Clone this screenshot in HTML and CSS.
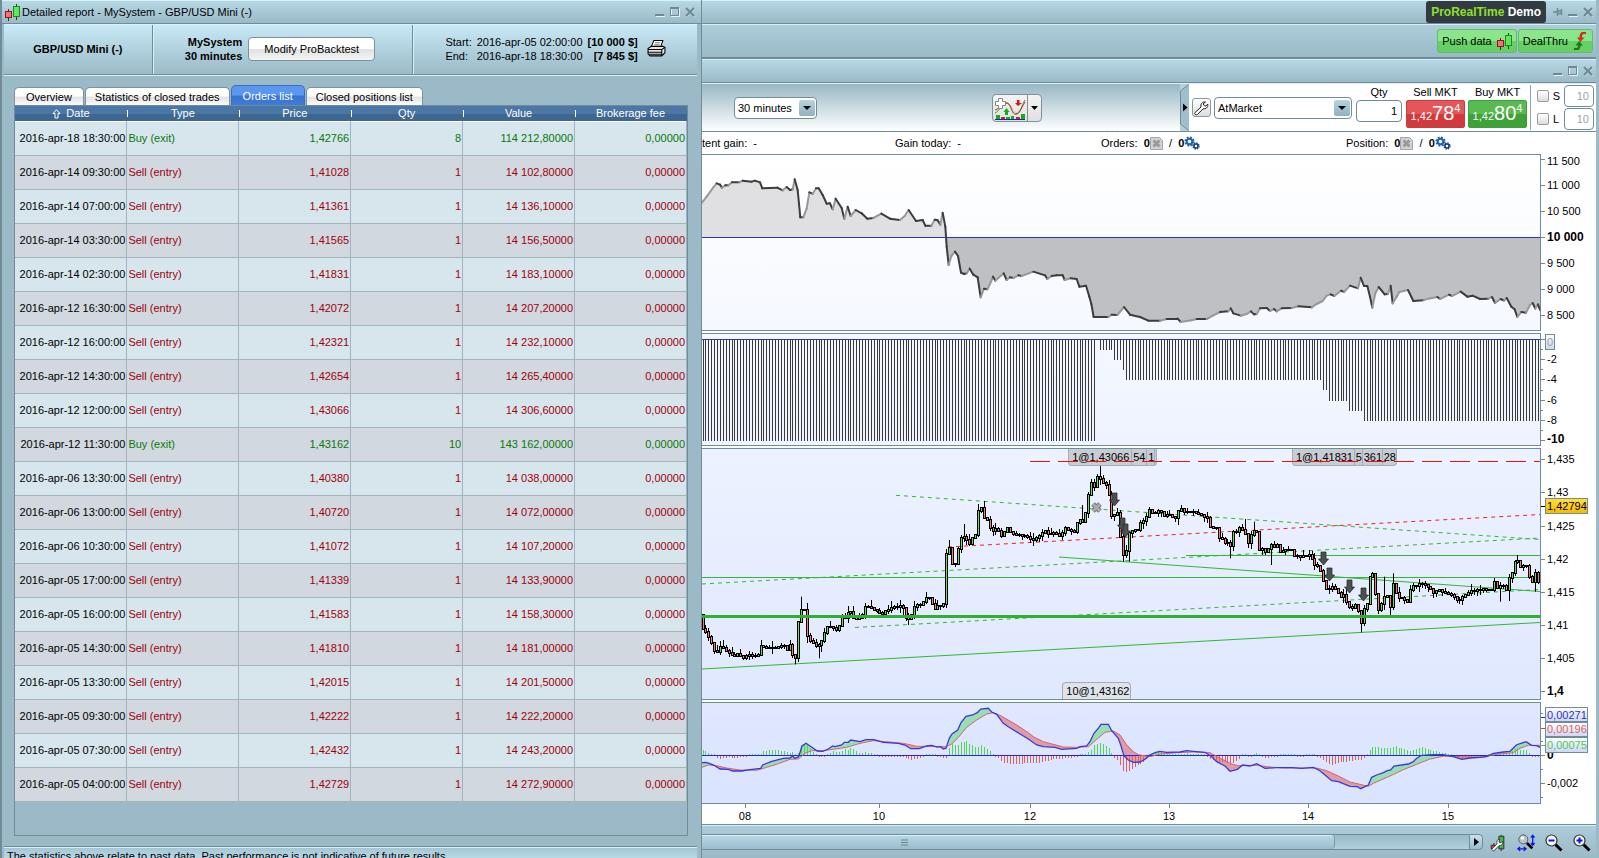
FILE: index.html
```html
<!DOCTYPE html>
<html lang="en">
<head>
<meta charset="utf-8">
<title>ProRealTime - Detailed report</title>
<link rel="stylesheet" href="styles.css">
</head>
<body>
<svg class="defs" aria-hidden="true">
  <symbol id="candles" viewBox="0 0 16 18">
    <path d="M4.500 6v12M12.500 1v16" stroke="#333" fill="none"/>
    <rect x="1.500" y="8.500" width="6" height="6" fill="#f4707c" stroke="#a01020"/>
    <rect x="9.500" y="3.500" width="6" height="10" fill="#5ee85e" stroke="#1c8a1c"/>
  </symbol>
  <symbol id="min" viewBox="0 0 10 10"><path d="M0 8h9" stroke="#6f8893" stroke-width="2"/><path d="M1 9.500h9" stroke="#e4f3f9"/></symbol>
  <symbol id="max" viewBox="0 0 10 10"><path d="M1.500 1.500h8v8h-8z" fill="none" stroke="#e4f3f9"/><path d="M.5 1h8v7.500h-8z" fill="none" stroke="#6f8893" stroke-width="1"/><path d="M0 1h9" stroke="#6f8893" stroke-width="2"/></symbol>
  <symbol id="close" viewBox="0 0 10 10"><path d="M1.500 2l8 8M9.500 2l-8 8" stroke="#e4f3f9" stroke-width="1"/><path d="M1 1l8 8M9 1L1 9" stroke="#6f8893" stroke-width="2"/></symbol>
  <symbol id="cancel" viewBox="0 0 13 13"><path d="M.5.5h9l3 3v9H.5z" fill="#d2d2d2" stroke="#a5a5a5"/><path d="M3.500 3.500l6 6M9.500 3.500l-6 6" stroke="#999" stroke-width="3"/></symbol>
  <symbol id="gears" viewBox="0 0 16 13">
    <circle cx="5.500" cy="5" r="2.800" fill="none" stroke="#1d5fb4" stroke-width="2"/>
    <circle cx="5.500" cy="5" r="4.300" fill="none" stroke="#1d5fb4" stroke-width="1.600" stroke-dasharray="1.900 1.477"/>
    <circle cx="12" cy="9.500" r="2" fill="none" stroke="#123f86" stroke-width="1.500"/>
    <circle cx="12" cy="9.500" r="3" fill="none" stroke="#123f86" stroke-width="1.300" stroke-dasharray="1.400 .956"/>
  </symbol>
  <symbol id="lens" viewBox="0 0 18 18"><path d="M10.500 10.500l6 6" stroke="#000" stroke-width="3"/><circle cx="6.500" cy="6.500" r="5.500" fill="#f2f8fb" stroke="#333" stroke-width="1.200"/></symbol>
</svg>
<main class="desktop">
  <section class="report">
    <header class="titlebar">
      <svg class="logo"><use href="#candles"/></svg>
      <span class="title">Detailed report - MySystem - GBP/USD Mini (-)</span>
      <div class="winbtns">
        <button aria-label="Minimize"><svg><use href="#min"/></svg></button>
        <button aria-label="Maximize"><svg><use href="#max"/></svg></button>
        <button aria-label="Close"><svg><use href="#close"/></svg></button>
      </div>
    </header>
    <div class="summary">
      <div class="cell instrument">GBP/USD Mini (-)</div>
      <div class="cell system">
        <div class="sysname">MySystem<br>30 minutes</div>
        <button class="modify">Modify ProBacktest</button>
      </div>
      <div class="cell period">
        <dl>
          <dt>Start:</dt><dd>2016-apr-05 02:00:00</dd><dd class="sum">[10 000 $]</dd>
          <dt>End:</dt><dd>2016-apr-18 18:30:00</dd><dd class="sum">[7 845 $]</dd>
        </dl>
        <button class="print" aria-label="Print"><svg viewBox="0 0 18 17"><path d="M6.500.5h8.500l-2 6H4z" fill="#fff" stroke="#000"/><path d="M7.500 2.500h5M7 4.500h5" stroke="#777"/><path d="M1 8l3-2h11l2 1v5l-3 3H3l-2-2z" fill="#e6e6e6" stroke="#000"/><path d="M1 9h13l3-2M1 11.500h13M14 9v6M2 13.500h12" stroke="#000" fill="none"/></svg></button>
      </div>
    </div>
    <nav class="tabs">
      <button>Overview</button><button class="wide">Statistics of closed trades</button><button class="active">Orders list</button><button class="wide">Closed positions list</button>
    </nav>
    <div class="tablebox">
      <table>
        <thead><tr><th><svg class="sort" viewBox="0 0 9 10"><path d="M4.500.7L8 4.500H6V9H3V4.500H1z" fill="none" stroke="#fff"/></svg>Date</th><th>Type</th><th>Price</th><th>Qty</th><th>Value</th><th>Brokerage fee</th></tr></thead>
        <tbody>
          <tr class="buy"><td>2016-apr-18 18:30:00</td><td>Buy (exit)</td><td>1,42766</td><td>8</td><td>114 212,80000</td><td>0,00000</td></tr>
          <tr><td>2016-apr-14 09:30:00</td><td>Sell (entry)</td><td>1,41028</td><td>1</td><td>14 102,80000</td><td>0,00000</td></tr>
          <tr><td>2016-apr-14 07:00:00</td><td>Sell (entry)</td><td>1,41361</td><td>1</td><td>14 136,10000</td><td>0,00000</td></tr>
          <tr><td>2016-apr-14 03:30:00</td><td>Sell (entry)</td><td>1,41565</td><td>1</td><td>14 156,50000</td><td>0,00000</td></tr>
          <tr><td>2016-apr-14 02:30:00</td><td>Sell (entry)</td><td>1,41831</td><td>1</td><td>14 183,10000</td><td>0,00000</td></tr>
          <tr><td>2016-apr-12 16:30:00</td><td>Sell (entry)</td><td>1,42072</td><td>1</td><td>14 207,20000</td><td>0,00000</td></tr>
          <tr><td>2016-apr-12 16:00:00</td><td>Sell (entry)</td><td>1,42321</td><td>1</td><td>14 232,10000</td><td>0,00000</td></tr>
          <tr><td>2016-apr-12 14:30:00</td><td>Sell (entry)</td><td>1,42654</td><td>1</td><td>14 265,40000</td><td>0,00000</td></tr>
          <tr><td>2016-apr-12 12:00:00</td><td>Sell (entry)</td><td>1,43066</td><td>1</td><td>14 306,60000</td><td>0,00000</td></tr>
          <tr class="buy"><td>2016-apr-12 11:30:00</td><td>Buy (exit)</td><td>1,43162</td><td>10</td><td>143 162,00000</td><td>0,00000</td></tr>
          <tr><td>2016-apr-06 13:30:00</td><td>Sell (entry)</td><td>1,40380</td><td>1</td><td>14 038,00000</td><td>0,00000</td></tr>
          <tr><td>2016-apr-06 13:00:00</td><td>Sell (entry)</td><td>1,40720</td><td>1</td><td>14 072,00000</td><td>0,00000</td></tr>
          <tr><td>2016-apr-06 10:30:00</td><td>Sell (entry)</td><td>1,41072</td><td>1</td><td>14 107,20000</td><td>0,00000</td></tr>
          <tr><td>2016-apr-05 17:00:00</td><td>Sell (entry)</td><td>1,41339</td><td>1</td><td>14 133,90000</td><td>0,00000</td></tr>
          <tr><td>2016-apr-05 16:00:00</td><td>Sell (entry)</td><td>1,41583</td><td>1</td><td>14 158,30000</td><td>0,00000</td></tr>
          <tr><td>2016-apr-05 14:30:00</td><td>Sell (entry)</td><td>1,41810</td><td>1</td><td>14 181,00000</td><td>0,00000</td></tr>
          <tr><td>2016-apr-05 13:30:00</td><td>Sell (entry)</td><td>1,42015</td><td>1</td><td>14 201,50000</td><td>0,00000</td></tr>
          <tr><td>2016-apr-05 09:30:00</td><td>Sell (entry)</td><td>1,42222</td><td>1</td><td>14 222,20000</td><td>0,00000</td></tr>
          <tr><td>2016-apr-05 07:30:00</td><td>Sell (entry)</td><td>1,42432</td><td>1</td><td>14 243,20000</td><td>0,00000</td></tr>
          <tr><td>2016-apr-05 04:00:00</td><td>Sell (entry)</td><td>1,42729</td><td>1</td><td>14 272,90000</td><td>0,00000</td></tr>
        </tbody>
      </table>
    </div>
    <footer class="note">The statistics above relate to past data. Past performance is not indicative of future results.</footer>
  </section>

  <section class="market">
    <header class="titlebar">
      <div class="brand"><span>ProRealTime</span> Demo</div>
      <div class="winbtns">
        <button aria-label="Pin"><svg viewBox="0 0 10 10"><path d="M0 5h4M4.500 1v8M5 4h4M5 6.500h4M8.500 2v6" stroke="#6f8893" stroke-width="1.500" fill="none"/></svg></button>
        <button aria-label="Minimize"><svg><use href="#min"/></svg></button>
        <button aria-label="Close"><svg><use href="#close"/></svg></button>
      </div>
    </header>
    <div class="actions">
      <button>Push data <svg class="i16"><use href="#candles"/></svg></button>
      <button>DealThru <svg class="i16" viewBox="0 0 16 18"><path d="M14 1c-4-1-6 1-5 6" stroke="#c8341c" stroke-width="2.500" fill="none"/><path d="M5 5.500h7.500L8.500 10z" fill="#c8341c"/><path d="M2 17c4 1 6-1 5-5" stroke="#177a17" stroke-width="2.500" fill="none"/><path d="M3.500 13.500h7.500L7 9z" fill="#177a17"/></svg></button>
    </div>
    <header class="titlebar sub">
      <div class="winbtns">
        <button aria-label="Minimize"><svg><use href="#min"/></svg></button>
        <button aria-label="Maximize"><svg><use href="#max"/></svg></button>
        <button aria-label="Close"><svg><use href="#close"/></svg></button>
      </div>
    </header>
    <div class="toolbar">
      <div class="picker tf"><select aria-label="Timeframe"><option>30 minutes</option></select></div>
      <div class="indicators">
        <button aria-label="Indicators"><svg viewBox="0 0 32 24"><path d="M1 17c5-2 6-9 11-10s7 12 11 11 4-8 8-14" fill="none" stroke="#2a9a2a"/><path d="M14 8l9 9-5 1z" fill="#bfe8cf"/><path d="M1 14c5-1 6-6 11-7s6 13 10 11 5-5 9-12" fill="none" stroke="#d8202a"/><path d="M2 19h4v4H2zM12 21h4v2h-4zM17 20h3v3h-3zM27 18h4v5h-4z" fill="#10b010"/><path d="M7 21h4v2H7zM22 21h4v2h-4z" fill="#d82020"/><path d="M1 23.500h30" stroke="#2020d0"/><path d="M12.500 12l3 4h-1.500v3h-3v-3H9.500z" fill="#10b010"/><path d="M24 10l-3-3h2V4h2.500v3H28z" fill="#e01010"/><path d="M4.500 2.500h4v3h3v4h-3v3h-4v-3h-3v-4h3z" fill="#fff" stroke="#7d8a90"/></svg></button>
        <button class="drop" aria-label="More indicators"><svg viewBox="0 0 7 4"><path d="M0 0h7L3.500 4z"/></svg></button>
      </div>
      <div class="order">
        <svg class="collapse" viewBox="0 0 9 47"><path d="M9 0H8.500L.5 7v33l8 7H9z" fill="#9fbfcc"/><path d="M8.500 .5L.5 7v33l8 6.500" fill="none" stroke="#6f8c98"/><path d="M3 19.500l4.500 4-4.500 4z"/></svg>
        <button class="tool" aria-label="Order settings"><svg viewBox="0 0 16 16"><path d="M2 12.500L8 7c-.8-3 1.500-5.500 4.500-5L10 4l2 2.300 2.800-2c.5 3-2 5-4.800 4.500L4.500 14.500c-1.500 1-3.500-.5-2.500-2z" fill="#fff" stroke="#222"/></svg></button>
        <div class="picker kind"><select aria-label="Order type"><option>AtMarket</option></select></div>
        <label class="qty">Qty<input type="text" value="1"></label>
        <div class="mkt"><span>Sell MKT</span><button class="sell">1,42<b>78</b><i>4</i></button></div>
        <div class="mkt"><span>Buy MKT</span><button class="buybtn">1,42<b>80</b><i>4</i></button></div>
        <div class="sl">
          <label><input type="checkbox"><span>S</span></label><input type="text" value="10" aria-label="Stop distance">
          <label><input type="checkbox"><span>L</span></label><input type="text" value="10" aria-label="Limit distance">
        </div>
      </div>
    </div>
    <div class="gains">
      <span>tent gain:&nbsp; -</span>
      <span>Gain today:&nbsp; -</span>
      <span>Orders:&nbsp; <b>0</b><svg class="i13"><use href="#cancel"/></svg>&nbsp; / &nbsp;<b>0</b><svg class="i1613"><use href="#gears"/></svg></span>
      <span>Position:&nbsp; <b>0</b><svg class="i13"><use href="#cancel"/></svg>&nbsp; / &nbsp;<b>0</b><svg class="i1613"><use href="#gears"/></svg></span>
    </div>
    <div class="charts">
      <div class="plots">
        <div class="plot p1"><svg id="equity" viewBox="702 155 838 175" preserveAspectRatio="none"></svg></div>
        <div class="plot p2"><svg id="count" viewBox="702 334 838 111" preserveAspectRatio="none"></svg></div>
        <div class="plot p3">
          <div class="tags top first"><span>1@1,43066</span><span>54</span><span>1</span><span></span></div>
          <div class="tags top second"><span>1@1,41831</span><span>5</span><span>361</span><span>28</span></div>
          <div class="tags bottom"><span>10@1,43162</span></div>
          <svg id="price" viewBox="702 449 838 250" preserveAspectRatio="none"></svg>
        </div>
        <div class="plot p4"><svg id="macd" viewBox="702 703 838 100" preserveAspectRatio="none"></svg></div>
      </div>
      <svg class="axis" id="axis" viewBox="1541 154 55 650"></svg>
      <div class="days" id="days"></div>
    </div>
    <footer class="scroller">
      <div class="track"><div class="thumb"><svg viewBox="0 0 8 7"><path d="M0 1h7M0 3.500h7M0 6h7" stroke="#6f8893"/></svg></div></div>
      <button class="next" aria-label="Scroll right"><svg viewBox="0 0 5 8"><path d="M0 0l5 4-5 4z"/></svg></button>
      <button class="ctl" aria-label="Chart settings"><svg viewBox="0 0 18 20"><path d="M4.500 10v9M12.500 1v18" stroke="#222"/><path d="M1.500 12.500h5v4h-5z" fill="#e0404a" stroke="#222"/><path d="M10 2.500h5.500v14H10z" fill="#49b649" stroke="#222"/><path d="M2 17l6-6c-1-3 0-5 3-5l-1 3 2 1 2-2c1 3-1 5-4 5l-6 6z" fill="#fff" stroke="#222" stroke-width=".8"/></svg></button>
      <button class="ctl" aria-label="Zoom to fit"><svg viewBox="0 0 20 20"><path d="M11 10l6 6" stroke="#000" stroke-width="3"/><circle cx="7" cy="6" r="5" fill="#b9c3c8" stroke="#555"/><circle cx="6" cy="4.500" r="2" fill="#fff"/><path d="M17.500 2v10M15.500 4l2-2.500 2 2.500M15.500 10l2 2.500 2-2.500M1 16.500h9M3.500 14.500L1 16.500l2.500 2M7.500 14.500l2.500 2-2.500 2" stroke="#1010e8" fill="none" stroke-width="1.400"/></svg></button>
      <button class="ctl" aria-label="Zoom out"><svg viewBox="0 0 18 18"><use href="#lens" width="18" height="18"/><path d="M3.500 6.500h6" stroke="#1010e8" stroke-width="2"/></svg></button>
      <button class="ctl" aria-label="Zoom in"><svg viewBox="0 0 18 18"><use href="#lens" width="18" height="18"/><path d="M3.500 6.500h6M6.500 3.500v6" stroke="#1010e8" stroke-width="2"/></svg></button>
    </footer>
  </section>
</main>
<script src="charts.js"></script>
</body>
</html>
```
FILE: styles.css
```css
* { box-sizing: border-box; }
body {
  margin: 0;
  height: 100vh;
  overflow: hidden;
  background: #9bb9c6;
  color: #000;
  font: 11px/14px "Liberation Sans", Arial, sans-serif;
}
button, input, select { font: inherit; color: inherit; margin: 0; }
button { padding: 0; border: 0; background: none; }
svg { display: block; }
.defs { position: absolute; width: 0; height: 0; }
.desktop { display: grid; grid-template-columns: minmax(0, 702fr) minmax(0, 897fr); height: 100vh; }

.titlebar {
  display: flex;
  align-items: center;
  height: 24px;
  flex: none;
  border-top: 1px solid #d8f0f9;
  border-bottom: 1px solid #6f8c98;
  background: linear-gradient(#b7d8e5, #9bb9c6);
}
.logo { width: 16px; height: 18px; }
.title { margin-left: 2px; white-space: nowrap; }
.winbtns { display: flex; gap: 5px; margin-left: auto; }
.winbtns svg { width: 10px; height: 10px; }

/* report window */
.report {
  display: flex;
  flex-direction: column;
  min-height: 0;
  border-left: 2px solid #6f8c98;
  border-right: 1px solid #6f8c98;
}
.report .titlebar { padding: 0 6px 0 2px; }
.summary {
  display: grid;
  grid-template-columns: 148fr 261fr 285fr;
  flex: none;
  height: 51px;
  margin: 0 4px 0 2px;
  border-top: 1px solid #d8f0f9;
  border-bottom: 1px solid #6f8c98;
  box-shadow: 0 1px #d8f0f9;
  background: linear-gradient(#c8e9f7, #9bb9c6);
}
.cell { display: flex; align-items: center; justify-content: center; padding-bottom: 2px; }
.cell + .cell { border-left: 1px solid #6f8c98; box-shadow: inset 1px 0 #d8f0f9; }
.instrument { font-weight: bold; }
.system { gap: 6px; justify-content: flex-start; padding-left: 32px; }
.sysname { text-align: right; font-weight: bold; }
.modify {
  width: 127px;
  height: 24px;
  border: 1px solid #7d929c;
  border-radius: 4px;
  background: linear-gradient(#fff 48%, #e2e2e2 52%, #f4f4f4);
}
.period { justify-content: flex-start; padding-left: 32px; gap: 9px; }
dl { display: grid; grid-template-columns: auto auto auto; gap: 0 5px; margin: 0; }
dd { margin: 0; }
.sum { font-weight: bold; text-align: right; }
.print svg { width: 19px; height: 18px; }
.tabs { display: flex; align-items: flex-end; height: 30px; flex: none; padding-left: 12px; }
.tabs button {
  height: 18px;
  padding: 0 11px;
  margin-right: 1px;
  border: 1px solid #7d929c;
  border-bottom: 0;
  border-radius: 5px 5px 0 0;
  background: linear-gradient(#fff 45%, #e4e4e4 55%, #fafafa);
  white-space: nowrap;
}
.tabs .wide { padding: 0 9px; }
.tabs .active { height: 20px; color: #fff; border-color: #3a6fc0; background: linear-gradient(#5b97ee 45%, #3a74cf 55%, #3f7bd8); }
.tablebox { flex: 1; min-height: 0; margin: 0 13px 10px 12px; border: 1px solid #6f8c98; overflow: hidden; }
table { width: 100%; border-collapse: collapse; table-layout: fixed; }
th {
  position: relative;
  height: 15px;
  padding: 0;
  color: #fff;
  font-weight: normal;
  line-height: 14px;
}
thead { background: linear-gradient(#4a77a5 50%, #3f6690 50%); }
th + th::before { content: ""; position: absolute; left: 0; top: 4px; width: 1px; height: 7px; background: #fff; }
.sort { display: inline-block; width: 9px; height: 10px; margin-right: 5px; vertical-align: -2px; }
td { height: 34px; padding: 0 1px; text-align: right; color: #a0000c; border: 1px solid #a4b4bc; border-width: 0 1px 1px 0; white-space: nowrap; }
td:first-child { color: #000; }
td:nth-child(2) { text-align: left; }
tbody tr:first-child td { border-top: 1px solid #fff; }
tbody tr:nth-child(odd) { background: #d7e6ed; }
tbody tr:nth-child(even) { background: #d1d8df; }
.buy td { color: #0a780a; }
.buy td:first-child { color: #000; }
.note {
  flex: none;
  height: 12px;
  padding-left: 3px;
  margin: 0 4px 0 2px;
  line-height: 18px;
  overflow: hidden;
  white-space: nowrap;
  border-top: 1px solid #6f8c98;
  box-shadow: inset 0 1px #d8f0f9;
  background: linear-gradient(#a4c4d1, #b7d8e5);
}

/* market window */
.market { display: flex; flex-direction: column; min-width: 0; border-right: 3px solid #9bb9c6; }
.market .titlebar { padding: 0 3px; }
.brand {
  height: 22px;
  margin-left: auto;
  padding: 0 5px;
  line-height: 22px;
  border-radius: 3px;
  background: #333b42;
  color: #fff;
  font-size: 12px;
  font-weight: bold;
}
.brand span { color: #8fe028; }
.brand + .winbtns { margin-left: 7px; }
.actions {
  display: flex;
  flex: none;
  justify-content: flex-end;
  gap: 1px;
  height: 35px;
  padding: 4px 3px 0;
  border-top: 1px solid #d8f0f9;
  border-bottom: 2px solid #6f8c98;
  background: linear-gradient(#adcddb, #9bb9c6);
}
.actions button {
  display: flex;
  align-items: center;
  gap: 4px;
  height: 24px;
  padding: 0 4px;
  border: 1px solid #62bd70;
  border-radius: 3px;
  background: linear-gradient(#8be58b 50%, #66cf66 50%);
}
.i16 { width: 16px; height: 18px; }
.toolbar {
  display: flex;
  align-items: center;
  flex: none;
  height: 49px;
  padding-left: 32px;
  border-top: 1px solid #d8f0f9;
  border-bottom: 1px solid #6f8c98;
  background: linear-gradient(#98b7c4, #fff);
}
.picker { position: relative; }
.picker select {
  appearance: none;
  display: block;
  width: 100%;
  height: 22px;
  padding: 0 3px;
  border: 1px solid #6f8c98;
  border-radius: 4px;
  background: #fff;
}
.picker::before { content: ""; position: absolute; right: 2px; top: 3px; width: 16px; height: 16px; border-radius: 2px; background: linear-gradient(#b5d4e0, #8fb2c1); pointer-events: none; }
.picker::after { content: ""; position: absolute; right: 6px; top: 9px; border: solid transparent; border-width: 4px 4px 0; border-top-color: #000; pointer-events: none; }
.tf { width: 83px; }
.kind { width: 138px; margin-left: 3px; }
.indicators { display: flex; flex: none; height: 28px; margin: 0 138px 0 auto; border: 1px solid #7d929c; border-radius: 4px; overflow: hidden; background: linear-gradient(#f4f4f4, #e0e0e0); }
.indicators svg { width: 32px; height: 24px; margin: 1px; }
.indicators .drop { display: flex; align-items: center; justify-content: center; width: 14px; border-left: 1px solid #7d929c; }
.indicators .drop svg { width: 7px; height: 4px; margin: 0; }
.order { display: flex; align-items: center; height: 47px; padding-right: 2px; background: #fff; }
.collapse { width: 9px; height: 47px; background: #b9cfd8; }
.tool { width: 19px; height: 19px; margin-left: 3px; border: 1px solid #8a979d; border-radius: 3px; background: linear-gradient(#fff, #ddd); }
.tool svg { width: 16px; height: 16px; }
input[type="text"] { width: 100%; min-width: 0; height: 22px; padding: 0 4px; border: 1px solid #6f8c98; border-radius: 4px; text-align: right; background: #fff; }
.qty { display: flex; flex-direction: column; gap: 1px; width: 46px; height: 45px; margin-left: 4px; text-align: center; }
.mkt { display: flex; flex-direction: column; gap: 1px; height: 45px; margin-left: 4px; text-align: center; }
.mkt + .mkt { margin-left: 3px; }
.mkt button { width: 59px; height: 28px; color: #fff; border-radius: 3px; line-height: 27px; white-space: nowrap; }
.mkt b { font-size: 20px; font-weight: normal; }
.mkt i { font-style: normal; vertical-align: 8px; line-height: 1px; }
.sell { background: linear-gradient(#e4565a 50%, #d23a3e 50%); box-shadow: inset 0 0 0 1px #c93c40; }
.buybtn { background: linear-gradient(#58ba50 50%, #3ea238 50%); box-shadow: inset 0 0 0 1px #3da03c; }
.sl { display: grid; grid-template-columns: auto 30px; gap: 1px 4px; margin-left: 3px; padding-left: 6px; border-left: 1px solid #8fa5af; align-items: center; }
.sl label { display: flex; align-items: center; gap: 4px; width: 23px; }
.sl input[type="checkbox"] { appearance: none; width: 12px; height: 12px; border: 1px solid #9a9a9a; border-radius: 2px; background: linear-gradient(#fff, #ddd); }
.sl input[type="text"] { color: #9aa6ab; }
.gains { display: grid; grid-template-columns: 193px 206px 245px auto; flex: none; height: 22px; background: #fff; align-items: center; white-space: nowrap; overflow: hidden; }
.gains span { display: flex; align-items: center; white-space: pre; }
.i13 { width: 13px; height: 13px; }
.i1613 { width: 16px; height: 14px; }

/* charts */
.charts {
  display: grid;
  grid-template-columns: minmax(0, 1fr) 55px;
  grid-template-rows: auto 20px;
  flex: none;
  background: #fff;
}
.plots { display: grid; gap: 2px; background: #fff; }
.plot { position: relative; border: 1px solid #6f8c98; border-left: 0; }
.plot > svg { position: relative; width: 100%; height: 100%; }
.p1 { height: 177px; background: linear-gradient(#fff, #f5f8ff); }
.p2 { height: 113px; background: linear-gradient(#f5f8ff, #eef3ff); }
.p3 { height: 252px; background: linear-gradient(#edf2ff, #e0e8ff); }
.p4 { height: 102px; background: linear-gradient(#e0e7ff, #dae4ff); }
.axis { width: 55px; height: 650px; }
.axis text { font-size: 11px; }
.axis .strong { font-size: 12px; font-weight: bold; }
.days { position: relative; grid-column: 1 / 3; margin-right: 56px; }
.days span { position: absolute; top: 0; width: 20px; margin-left: -10px; padding-top: 5px; text-align: center; line-height: 14px; }
.days span::before { content: ""; position: absolute; top: 0; left: 10px; width: 1px; height: 4px; background: #6f8c98; }
.tags { position: absolute; display: flex; height: 17px; white-space: nowrap; background: #c8ccd4; border: 1px solid #a8acb2; border-radius: 0 0 4px 4px; line-height: 16px; }
.tags.top { top: 0; border-top: 0; }
.tags span + span { border-left: 1px solid #a8acb2; padding-left: 1px; }
.tags span:first-child { padding-left: 3px; }
.first { left: 43.7%; width: 89px; }
.first span:nth-child(1) { width: 62px; }
.first span:nth-child(2) { width: 15px; }
.first span:nth-child(3) { width: 8px; }
.second { left: 70.4%; width: 105px; }
.second span:nth-child(1) { width: 61px; }
.second span:nth-child(2) { width: 8px; }
.second span:nth-child(3) { width: 20px; }
.tags.bottom { left: 43%; bottom: 0; width: 69px; background: #dfe3ea; border-bottom: 0; border-radius: 4px 4px 0 0; }

/* bottom bar */
.scroller {
  display: flex;
  align-items: flex-start;
  flex: 1;
  padding: 9px 4px 0 0;
  border-top: 1px solid #6f8c98;
  box-shadow: inset 0 1px #d8f0f9;
  background: linear-gradient(#adcddb, #9bb9c6);
}
.track { flex: 1; height: 16px; border: 1px solid #6f8c98; border-width: 1px 0; background: linear-gradient(#9bb9c6, #b0d0dd); }
.thumb { display: flex; align-items: center; justify-content: center; width: 82.5%; padding-right: 226px; height: 14px; border: 1px solid #7d98a4; border-width: 0 1px 0 0; border-radius: 0 4px 4px 0; box-shadow: inset 0 1px #d8f0f9; background: linear-gradient(#b7d8e5, #9bbccb); }
.thumb svg { width: 8px; height: 7px; }
.next { display: flex; align-items: center; justify-content: center; width: 14px; height: 16px; border: 1px solid #6f8c98; border-radius: 0 4px 4px 0; background: linear-gradient(#c5e2ee, #9bbccb); }
.next svg { width: 5px; height: 8px; }
.ctl { width: 20px; margin-left: 8px; }
.next + .ctl { margin-left: 5px; }
.ctl svg { width: 20px; height: 18px; }
```
FILE: charts.js
```js
const LEFT = 702, RIGHT = 1540, STEP = 2.9;

// "x,y x,y ..." lists are stored at three units per pixel, relative to an origin.
function points(ox, oy, text) {
  return text.trim().split(/\s+/).map(p => {
    const [x, y] = p.split(',').map(Number);
    return [ox + x / 3, oy + y / 3];
  });
}
function at(list, x) {
  if (x <= list[0][0]) return list[0][1];
  for (let i = 1; i < list.length; i++) {
    const [x0, y0] = list[i - 1], [x1, y1] = list[i];
    if (x <= x1) return y0 + (y1 - y0) * (x - x0) / (x1 - x0 || 1);
  }
  return list[list.length - 1][1];
}
const poly = list => list.map(p => p[0].toFixed(1) + ',' + p[1].toFixed(1)).join(' ');
const line = (x1, y1, x2, y2, extra) => `<line x1="${x1}" y1="${y1}" x2="${x2}" y2="${y2}" ${extra}/>`;
const rect = (x, y, w, h, fill) => `<rect x="${x}" y="${y}" width="${w}" height="${h}" fill="${fill}"/>`;
const put = (id, html) => { document.getElementById(id).innerHTML = html; };

// Equity curve
const equity = points(700, 80, `6,368 20,350 40,322 50,310 60,314 66,323 76,316 85,316 96,307 118,307 128,302 155,305 165,302 180,307 187,325 232,323 248,331 260,321 270,330 278,328 284,298 293,330 301,412 310,412 320,385 328,337 338,341 348,325 356,325 368,345 380,371 390,370 398,388 407,356 425,384 433,416 443,380 452,408 467,390 485,400 502,416 520,414 544,401 570,416 600,420 614,408 626,390 648,423 668,420 676,437 694,437 704,419 713,421 721,434 728,398 736,440 740,500 746,555 754,528 765,515 774,528 783,578 792,582 800,580 809,566 820,584 833,592 842,652 852,626 862,628 870,612 879,590 886,602 911,580 920,600 930,592 940,594 955,586 965,588 1000,575 1035,586 1042,597 1055,588 1070,586 1088,586 1094,600 1112,595 1130,597 1138,620 1158,617 1168,650 1174,672 1181,711 1225,711 1235,704 1252,705 1272,681 1290,704 1320,711 1345,722 1380,722 1400,717 1430,717`)
  .concat(points(1150, 150, `0,512 30,513 45,508 83,506 92,516 125,511 140,507 170,507 190,496 210,486 235,484 242,475 250,490 272,497 290,492 303,484 312,493 320,492 330,475 350,474 360,483 372,477 380,484 395,475 425,474 445,469 485,472 500,462 518,453 530,437 542,433 553,438 573,422 582,426 600,407 624,415 632,383 642,408 652,408 660,440 667,473 676,430 686,411 704,433 714,432 722,407 728,460 740,440 748,426 774,420 790,453 820,451 835,446 862,441 870,447 897,434 906,438 932,425 952,440 968,437 990,447 1015,446 1026,441 1035,459 1052,447 1062,452 1070,444 1084,470 1094,478 1102,501 1114,486 1128,488 1140,465 1148,459 1156,476 1164,463 1170,480`).filter(p => p[0] > 1177))
  .sort((a, b) => a[0] - b[0]);
{
  const zero = 237.5;
  const up = equity.map(([x, y]) => [x, Math.min(y, zero)]);
  const down = equity.map(([x, y]) => [x, Math.max(y, zero)]);
  let s = `<polygon fill="#e0e0e2" points="${LEFT},${zero} ${poly(up)} ${RIGHT},${zero}"/>`;
  s += `<polygon fill="#bfc0c4" points="${LEFT},${zero} ${poly(down)} ${RIGHT},${zero}"/>`;
  for (let i = 1; i < equity.length; i++) {
    const [a, b] = [equity[i - 1], equity[i]];
    const color = b[1] < a[1] - 1 ? '#989898' : '#3c3c3c';
    s += line(a[0], a[1], b[0], b[1], `stroke="${color}" stroke-width="2" stroke-linecap="round"`);
  }
  s += rect(LEFT, 237, 838, 1, '#3030d0');
  put('equity', s);
}

// Open position count
{
  let s = '';
  for (let i = 0; ; i++) {
    const x = Math.floor(703 + i * STEP);
    if (x >= RIGHT) break;
    let y = 421;
    if (x < 1095) y = 441;
    else if (x < 1099) continue;
    else if (x < 1113) y = 350;
    else if (x < 1121) y = 360;
    else if (x < 1124) y = 370;
    else if (x < 1322) y = 380;
    else if (x < 1328) y = 390;
    else if (x < 1348) y = 401;
    else if (x < 1362) y = 411;
    s += rect(x, 340, 1, y - 340, '#3a3a3a');
  }
  put('count', s + rect(LEFT, 339, 838, 1, '#3030d0'));
}

// Price candles and trend lines
{
  const path = points(700, 440, `6,525 9,560 18,570 30,590 42,615 50,640 60,635 68,618 80,630 95,640 105,648 120,642 135,655 150,645 165,648 180,645 185,618 200,622 220,626 240,620 255,615 268,630 275,610 284,655 291,655 296,618 302,510 318,510 322,545 329,605 340,600 350,620 365,615 378,580 384,555 393,575 400,540 408,580 418,565 430,545 435,500 444,550 452,510 460,520 468,540 480,535 492,525 502,498 520,505 535,512 550,525 560,515 580,503 605,498 615,505 625,538 636,535 645,505 655,495 670,495 680,475 695,475 705,500 714,510 722,478 732,525 737,470 745,325 753,325 758,365 767,380 777,360 783,295 800,290 811,315 820,295 835,280 841,200 851,205 853,235 865,235 875,260 880,285 888,265 897,268 910,290 925,262 935,275 950,285 965,285 985,290 1005,300 1020,292 1040,272 1055,285 1065,278 1085,290 1100,265 1115,272 1130,275 1140,237 1155,248 1165,200 1175,130 1183,130 1190,145 1200,95 1208,125 1218,130 1232,145 1236,225 1245,230 1255,215 1265,240 1267,343 1283,345 1288,285 1300,272 1320,270 1325,250 1340,240 1350,215`)
    .concat(points(1150, 440, `3,210 15,222 35,208 45,230 60,225 85,235 93,200 105,215 130,215 150,222 180,235 187,265 205,265 207,300 220,290 225,310 240,310 243,348 250,275 262,280 275,262 290,280 303,318 312,270 325,275 330,330 345,325 355,345 365,310 375,325 385,310 395,335 410,330 430,330 435,348 460,350 490,345 495,375 510,380 520,400 530,445 540,450 555,440 570,460 575,475 585,465 600,500 610,505 628,490 633,550 640,550 645,505 655,510 660,465 667,402 677,402 683,490 690,510 700,490 710,465 720,470 725,515 732,425 740,445 748,475 765,475 775,495 790,435 800,440 815,430 840,440 855,460 870,448 890,460 910,465 930,482 950,465 965,455 985,450 1000,448 1030,450 1037,425 1050,450 1060,430 1075,450 1085,405 1095,395 1103,355 1115,380 1130,375 1140,385 1143,410 1155,430 1160,395 1168,425`));
  const wicks = points(700, 440, '302,470 284,673 291,673 355,655 735,542 745,300 790,252 851,183 1147,195 1198,78 1267,365 1285,365')
    .concat(points(1150, 440, '222,240 243,355 285,237 312,245 362,375 632,577 672,400 703,410 725,525 728,400 1050,485 1078,483 1103,348 1155,455'));
  let seed = 7;
  const rnd = () => (seed = (seed * 16807) % 2147483647) / 2147483647;
  let s = '';
  const green = 'stroke="#30b830" fill="none"';
  const dash = 'stroke="#30b830" stroke-dasharray="4 4"';
  s += line(702, 577.5, 1540, 577.5, green) + line(1186, 555.5, 1540, 555.5, green);
  s += line(702, 669, 1540, 622.5, green) + line(1059, 557, 1540, 591.5, green);
  s += line(896, 495.3, 1540, 539.5, dash) + line(702, 584, 1540, 538, dash) + line(855, 627.5, 1540, 589.5, dash);
  s += line(948, 547, 1540, 514.5, 'stroke="#f02020" stroke-dasharray="4 4"');
  let prev = at(path, LEFT);
  for (let i = 0; ; i++) {
    const x = Math.floor(703 + i * STEP);
    if (x >= RIGHT - 1) break;
    const close = at(path, x + 2);
    const top = Math.round(Math.min(prev, close)) - 1, bottom = Math.round(Math.max(prev, close)) + 1;
    let high = top - Math.floor(rnd() * rnd() * 8), low = bottom + Math.floor(rnd() * rnd() * 7);
    for (const w of wicks) if (Math.abs(w[0] - x - .5) < 1.5) { high = Math.min(high, w[1]); low = Math.max(low, w[1]); }
    s += rect(x, high, 1, low - high, '#000') + rect(x - 1, top, 3, bottom - top, '#000');
    if (bottom - top > 2) s += rect(x, top + 1, 1, bottom - top - 2, close < prev ? '#5fe06a' : '#f08078');
    prev = close;
  }
  s += rect(702, 615, 838, 3, '#30b030');
  s += line(1030, 461.5, 1540, 461.5, 'stroke="#f01010" stroke-dasharray="20 8"');
  for (const [x, y] of [[1114, 493], [1122, 518], [1125, 524], [1323, 552], [1329, 568], [1349, 580], [1363, 588]])
    s += `<path d="M${x - 2} ${y}h5v7h2.500l-5 6-5-6h2.500z" fill="#4c4f50" stroke="#222" stroke-width=".7"/>`;
  s += '<path d="M1093 504l7 7M1100 504l-7 7" stroke="#777" stroke-width="5"/><path d="M1093 504l7 7M1100 504l-7 7" stroke="#aaa" stroke-width="3"/>';
  put('price', s);
}

// MACD
{
  const blue = points(700, 690, `6,218 18,217 30,221 42,226 60,237 85,238 98,243 125,243 150,239 182,235 188,225 215,214 250,205 270,204 278,198 284,205 296,200 306,168 318,160 330,168 352,183 368,184 385,177 398,168 405,170 425,165 433,157 445,157 452,150 480,155 498,149 522,149 550,157 595,160 615,165 632,176 658,176 680,168 695,166 712,171 722,170 730,177 738,175 748,145 756,132 773,120 783,98 798,79 818,75 832,68 842,57 865,55 875,66 890,73 910,100 925,110 985,147 1010,165 1030,170 1065,172 1085,178 1130,175 1140,170 1160,168 1170,155 1182,130 1197,112 1203,103 1225,103 1235,122 1255,145 1262,165 1272,198 1285,210 1300,217 1320,216 1335,208 1350,195`)
    .concat(points(1150, 690, `15,188 30,184 50,187 90,186 110,182 130,184 165,187 185,200 200,215 225,228 240,244 262,238 278,225 300,228 320,221 345,235 380,233 425,233 455,235 490,232 510,242 525,255 545,272 565,275 580,281 600,289 622,290 632,296 655,285 665,262 680,255 700,248 712,242 722,240 732,228 775,222 790,215 800,205 815,196 850,194 880,194 910,200 935,208 960,204 990,202 1010,200 1030,190 1060,186 1080,184 1100,164 1128,155 1145,166 1160,167 1170,172`));
  const red = points(700, 690, `6,232 25,225 50,227 80,234 120,240 170,241 200,232 230,223 270,208 295,207 315,190 335,182 370,182 400,178 440,172 480,160 520,152 560,155 610,160 650,169 690,169 720,170 738,170 755,162 775,142 800,112 830,90 860,72 880,68 900,76 950,105 985,128 1000,140 1030,155 1090,171 1130,172 1165,170 1190,148 1215,127 1240,123 1260,135 1280,165 1300,185 1315,194 1350,200`)
    .concat(points(1150, 690, `30,192 80,188 130,186 180,188 215,207 245,222 265,227 320,226 360,231 400,234 500,234 530,242 565,258 600,276 655,289 670,280 720,258 760,239 800,223 840,207 880,199 930,200 1000,201 1040,193 1090,188 1110,175 1135,166 1170,166`));
  let fill = '', bars = '';
  for (let x = LEFT; x < RIGHT; x++) {
    const b = at(blue, x), r = at(red, x);
    fill += rect(x, Math.min(b, r).toFixed(1), 1, Math.abs(b - r).toFixed(1), b < r ? '#98deb4' : '#dc9cac');
  }
  for (let i = 0; ; i++) {
    const x = Math.floor(703 + i * STEP);
    if (x >= RIGHT) break;
    const d = at(red, x) - at(blue, x), h = Math.max(1, Math.round(Math.abs(d) * 1.15));
    bars += d > 0 ? rect(x, 755 - h, 1, h, '#50d850') : rect(x, 756, 1, h, '#e06060');
  }
  put('macd', fill + bars + rect(LEFT, 755, 838, 1, '#2828c8')
    + `<polyline points="${poly(red)}" fill="none" stroke="#e06468"/>`
    + `<polyline points="${poly(blue)}" fill="none" stroke="#3838d8" stroke-width="1.300"/>`);
}

// Value axis
{
  let s = '<defs><linearGradient id="box" x2="0" y2="1"><stop stop-color="#fff"/><stop offset="1" stop-color="#ccd6f4"/></linearGradient><linearGradient id="gold" x2="0" y2="1"><stop stop-color="#ffe040"/><stop offset="1" stop-color="#f8b800"/></linearGradient></defs>';
  const tick = (y, w = 4, c = '#6f8c98') => rect(1541, y, w, 1, c);
  const label = (y, text, cls = '', fill = '#000', x = 1547) => `<text x="${x}" y="${y + 4}" class="${cls}" fill="${fill}">${text}</text>`;
  [['11 500', 161, 159], ['11 000', 185, 185], ['10 500', 211, 211], ['10 000', 237, 237], ['9 500', 263, 263], ['9 000', 289, 289], ['8 500', 315, 315],
   ['-2', 359, 359], ['-4', 379, 379], ['-6', 400, 400], ['-8', 420, 420], ['-10', 439, 440],
   ['1,435', 459, 459], ['1,43', 492, 492], ['1,425', 526, 526], ['1,42', 559, 559], ['1,415', 592, 592], ['1,41', 625, 625], ['1,405', 658, 658], ['1,4', 691, 691],
   ['0', 755, 755], ['-0,002', 783, 783]].forEach(([t, y, ty]) => {
    s += tick(ty) + label(y, t, ['10 000', '-10', '1,4', '0'].includes(t) ? 'strong' : '');
  });
  [349, 369, 390, 410, 430, 713, 741, 769, 797].forEach(y => { s += tick(y, 2); });
  s += tick(339) + tick(506, 4, '#000') + tick(717, 4, '#3030d0') + tick(728, 4, '#e04040') + tick(745, 4, '#40c840');
  const box = (x, y, w, h, f) => `<rect x="${x}.5" y="${y}.5" width="${w}" height="${h}" fill="url(#${f})" stroke="#6f8c98"/>`;
  s += box(1545, 334, 9, 15, 'box') + label(342, '0', '', '#8fa09a');
  s += box(1545, 498, 42, 15, 'gold') + label(506, '1,42794');
  s += box(1545, 737, 42, 15, 'box') + label(745, '0,00075', '', '#50c850');
  s += box(1545, 722, 42, 14, 'box') + label(729, '0,00196', '', '#e06060');
  s += box(1545, 707, 42, 14, 'box') + label(715, '0,00271', '', '#3030d0');
  put('axis', s);
}

// Time axis
put('days', [['08', 745], ['10', 879], ['12', 1030], ['13', 1169], ['14', 1308], ['15', 1448]]
  .map(([t, x]) => `<span style="left:${((x - LEFT) / (RIGHT - LEFT) * 100).toFixed(2)}%">${t}</span>`).join(''));
```
